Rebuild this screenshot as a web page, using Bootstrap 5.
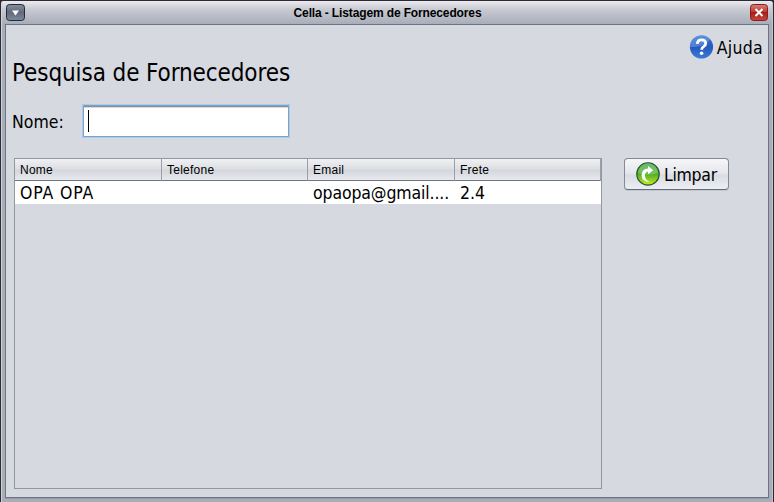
<!DOCTYPE html>
<html lang="pt-BR">
<head>
<meta charset="utf-8">
<title>Cella - Listagem de Fornecedores</title>
<link href="https://cdn.jsdelivr.net/npm/bootstrap@5.3.0/dist/css/bootstrap.min.css" rel="stylesheet">
<style>
body{font-family:"DejaVu Sans Condensed","DejaVu Sans",sans-serif;font-stretch:condensed;color:#000;background:#2b2a33;font-size:17.5px;line-height:20px}
.window{width:774px;height:502px;border:1px solid #2b2a33;border-bottom:0;border-radius:3px 3px 0 0;background:linear-gradient(#eceaf0 0,#c9cbd3 8px,#a9adb8 23px,#a9adb8 100%);padding:0 4px 4px;box-shadow:inset 1px 0 #d4d5dc,inset -1px 0 #c4c6ce}
.titlebar{height:23px;padding:3px 0 0 1px}
.caption-text{font:bold 12px/18px "Liberation Sans",Arial,sans-serif;letter-spacing:-.13px}
.pane{height:474px;border:1px solid #6c7583;background:#d6d9e0;padding:10px 5px 0 6px;box-shadow:0 1px #969dab}
.help{height:24px;gap:3px}
.help span{letter-spacing:.3px;padding-top:1px}
.heading{font-size:24px;line-height:28px;font-weight:400;margin:0 0 17px;letter-spacing:-.1px}
.search{height:34px;margin-bottom:20px}
.search label{width:70px;padding-top:2px}
.search .field{width:208px;height:34px;border:2px solid #73a4d1;outline:1px solid #b3cbe2;outline-offset:-1px;border-radius:2px;background:#fff;box-shadow:inset 0 1px #8d8e94,inset 0 2px #d9dadd;padding:4px}
.caret{width:1px;height:22px;background:#000}
.grid{width:588px;height:331px;border:1px solid #9297a1;margin-left:2px}
.cols{display:grid;grid-template-columns:147px 146px 147px 146px}
.heads{height:22px;font:12px/22px "Liberation Sans",Arial,sans-serif;background:linear-gradient(#f0f1f3,#dcdee3 48%,#d3d6dc 52%,#e7e9ee);border-bottom:1px solid #6c7583;letter-spacing:.25px}
.heads>div{border-right:1px solid #9a9fa9;padding-left:5px}
.values{height:23px;background:#fff;line-height:25px}
.values>div{padding-left:5px;white-space:nowrap}
.values>.name{letter-spacing:.85px}
.values>.mail{letter-spacing:-.12px}
.clear-btn,.clear-btn:hover{width:105px;height:32px;margin-left:22px;padding:0 0 0 11px;gap:4px;border:1px solid #858993;border-bottom-color:#666e7b;border-radius:4px;background:linear-gradient(#f7f7f9,#e4e6eb 48%,#d9dce3 54%,#eceef3);color:#000;font-size:17.5px;line-height:20px;box-shadow:0 1px #c2c5cd}
.clear-btn span{letter-spacing:-.3px;padding-top:2px}
</style>
</head>
<body>
<div class="window">
  <div class="titlebar d-flex justify-content-between align-items-start">
    <svg width="19" height="18" viewBox="0 0 19 18"><defs><linearGradient id="m" x2="0" y2="1"><stop stop-color="#858d9c"/><stop offset=".5" stop-color="#616b7d"/><stop offset="1" stop-color="#7e899c"/></linearGradient></defs><rect x=".5" y=".5" width="18" height="16" rx="3" fill="url(#m)" stroke="#252b3b"/><path d="M6 6.5h7l-3.5 5z" fill="#fff"/></svg>
    <div class="caption-text">Cella - Listagem de Fornecedores</div>
    <svg width="19" height="18" viewBox="0 0 19 18"><defs><linearGradient id="x" x2="0" y2="1"><stop stop-color="#d88178"/><stop offset=".45" stop-color="#bb3c32"/><stop offset=".5" stop-color="#a91f18"/><stop offset="1" stop-color="#c8473c"/></linearGradient></defs><rect x=".5" y=".5" width="17" height="16" rx="3" fill="url(#x)" stroke="#8a1b1b"/><path d="M5.5 5l7 7m0-7l-7 7" stroke="#fff" stroke-width="2"/></svg>
  </div>
  <main class="pane">
    <div class="help d-flex justify-content-end align-items-center">
      <svg width="25" height="24" viewBox="0 0 25 24"><defs><linearGradient id="h" x2="0" y2="1"><stop stop-color="#3d78cf"/><stop offset=".5" stop-color="#245abc"/><stop offset="1" stop-color="#3b7bda"/></linearGradient></defs><circle cx="12.5" cy="12" r="11.6" fill="url(#h)"/><path d="M1 12a11.5 11.5 0 0 1 20-8Q17 12 1 12z" fill="#73a0e3" opacity=".55"/><path d="M8.3 8.8q.3-4 4.2-4 4.2 0 4.2 3.6 0 1.9-2.1 3.2-1.9 1.1-1.9 3.2" fill="none" stroke="#fff" stroke-width="2.8"/><circle cx="12.6" cy="18.3" r="1.8" fill="#fff"/></svg>
      <span>Ajuda</span>
    </div>
    <h1 class="heading">Pesquisa de Fornecedores</h1>
    <div class="search d-flex align-items-center"><label>Nome:</label><div class="field"><div class="caret"></div></div></div>
    <div class="d-flex align-items-start">
      <div class="grid">
        <div class="cols heads"><div>Nome</div><div>Telefone</div><div>Email</div><div>Frete</div></div>
        <div class="cols values"><div class="name">OPA OPA</div><div></div><div class="mail">opaopa@gmail....</div><div>2.4</div></div>
      </div>
      <button class="btn clear-btn d-flex align-items-center" type="button">
        <svg width="24" height="24" viewBox="0 0 24 24"><defs><linearGradient id="g" x2="0" y2="1"><stop stop-color="#379b45"/><stop offset=".5" stop-color="#50ad20"/><stop offset="1" stop-color="#c8ed28"/></linearGradient></defs><circle cx="12" cy="12" r="11.2" fill="url(#g)" stroke="#28532f" stroke-width="1.2"/><path d="M2 11a10 10 0 0 1 20 0Q12 14 2 11z" fill="#b5e4b5" opacity=".4"/><path d="M14 20.2Q5.5 19.5 5.5 13.2 6 6.5 12 6.5V4l5.2 4.2-5.2 4V9.6Q9 10 9 13.5q0 4.5 5 6.7z" fill="#fff"/></svg>
        <span>Limpar</span>
      </button>
    </div>
  </main>
</div>
<script src="https://cdn.jsdelivr.net/npm/bootstrap@5.3.0/dist/js/bootstrap.bundle.min.js"></script>
</body>
</html>
